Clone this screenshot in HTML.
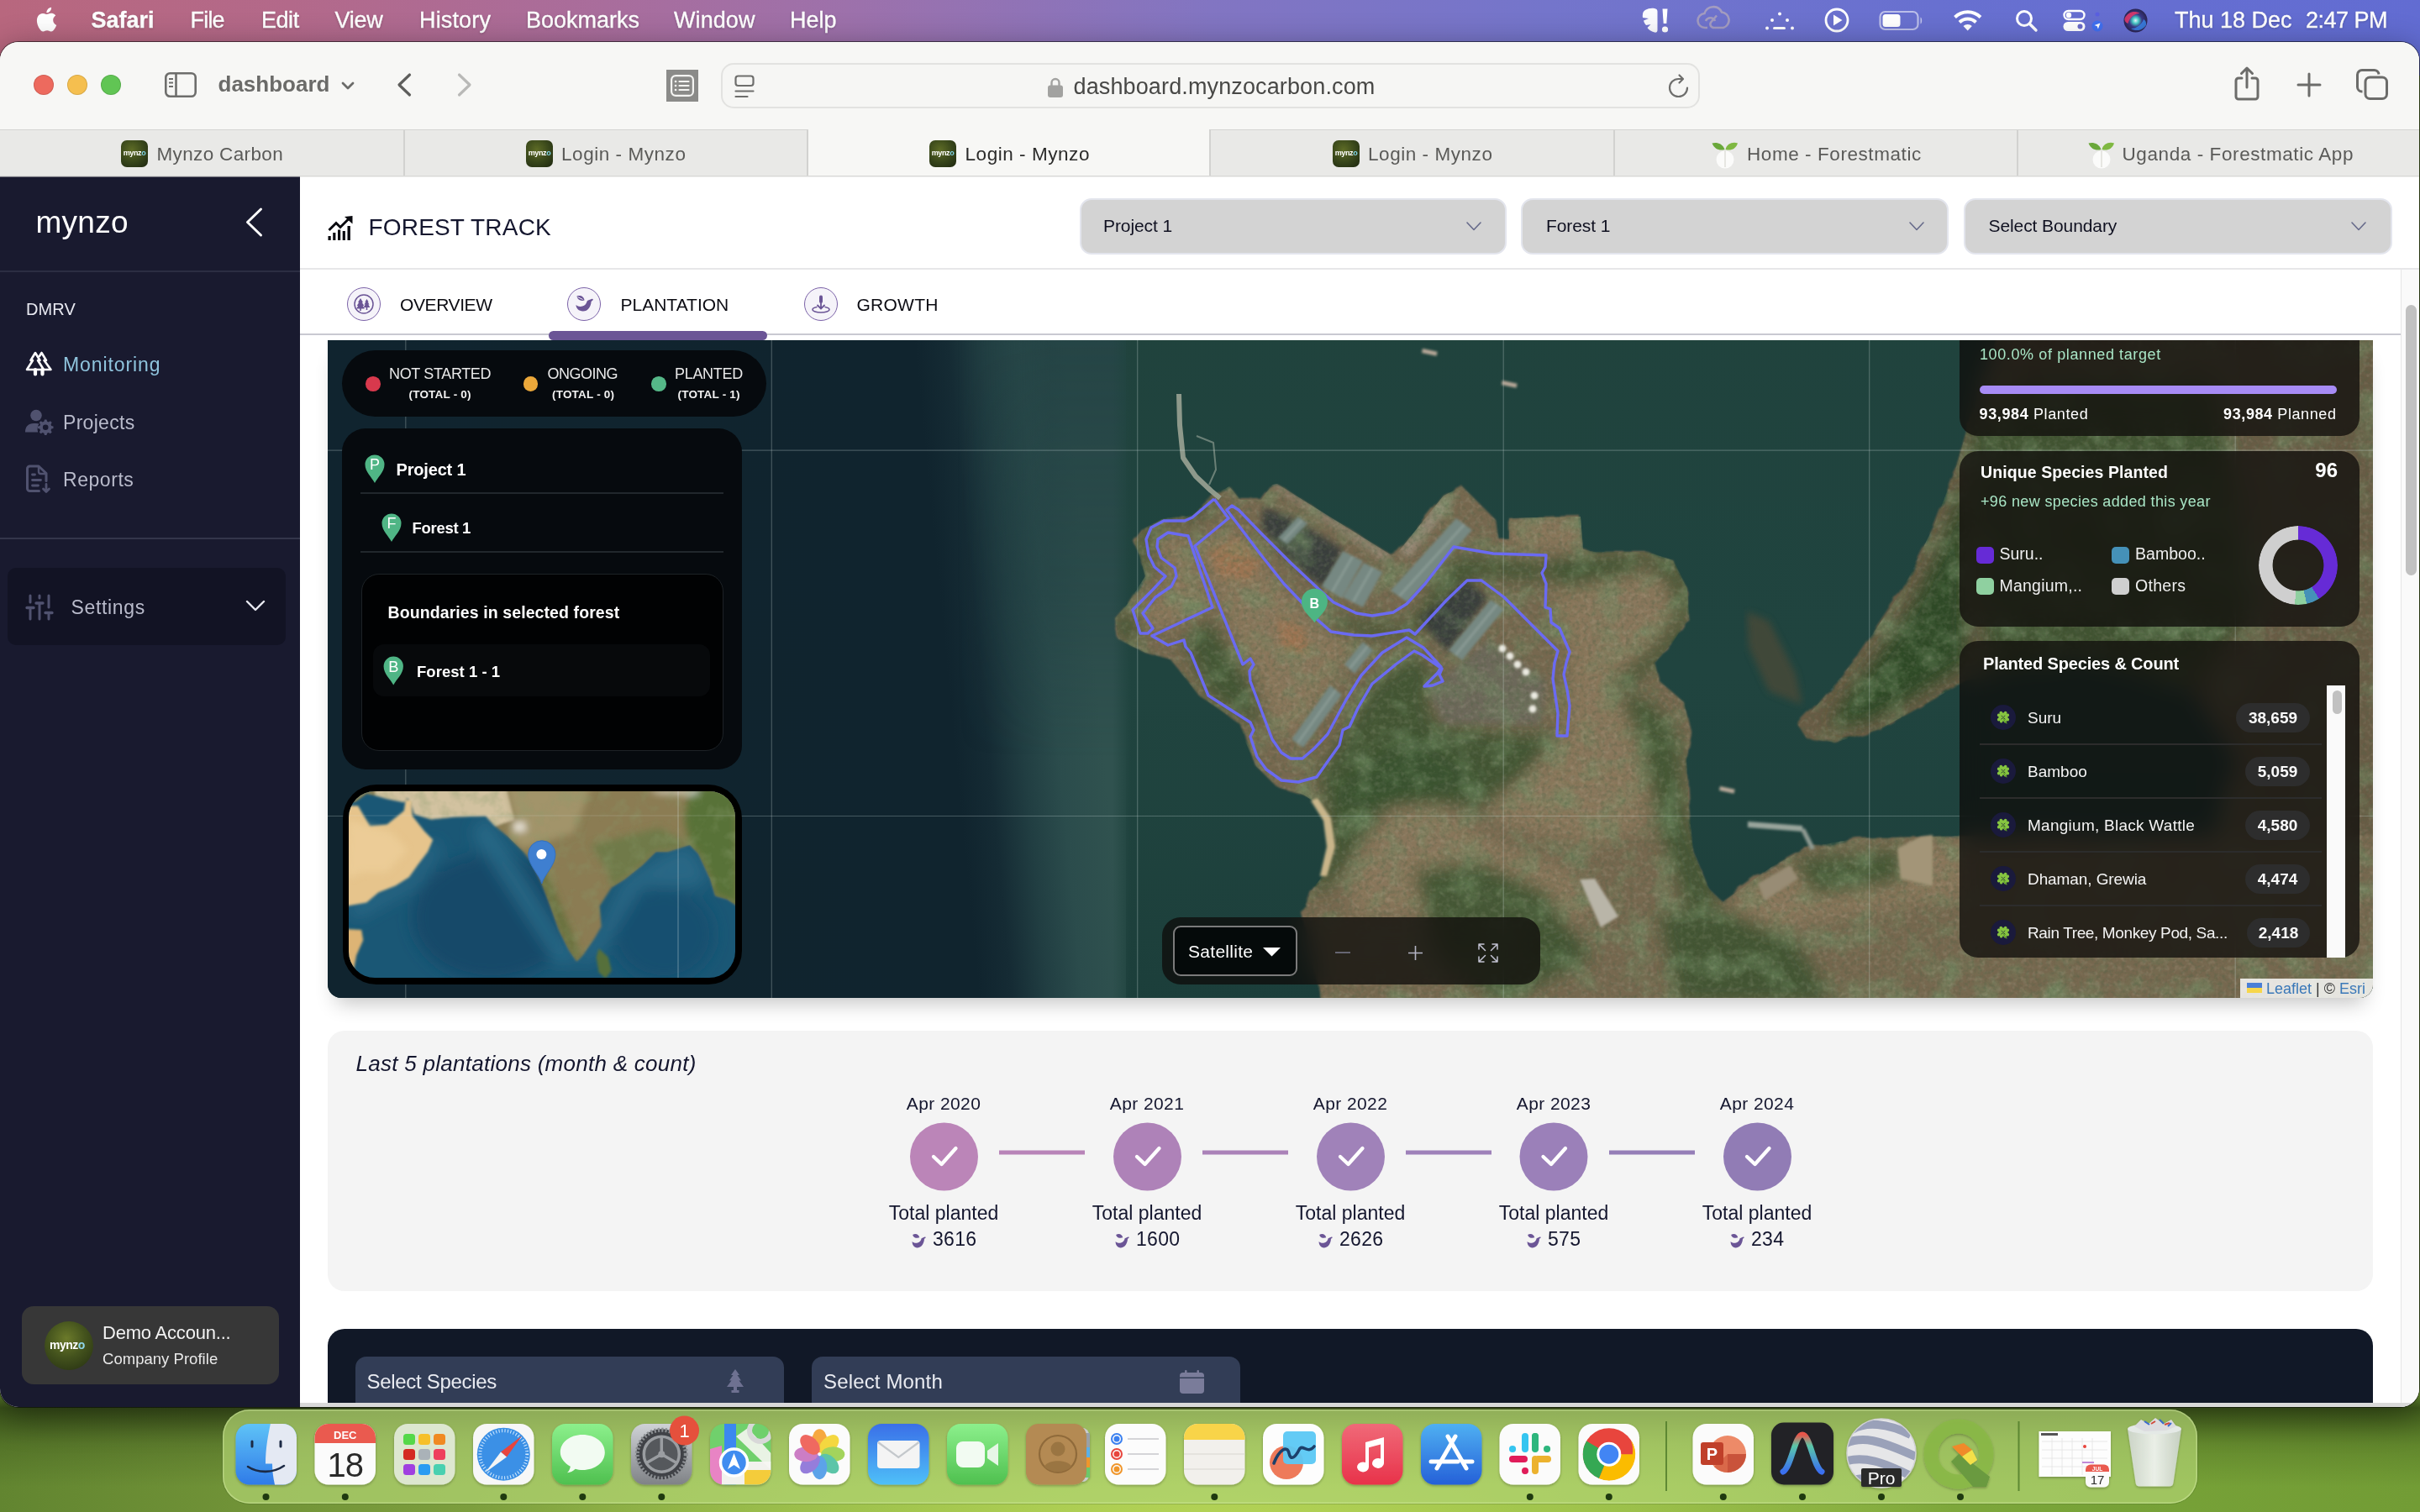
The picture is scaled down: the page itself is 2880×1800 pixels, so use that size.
<!DOCTYPE html>
<html lang="en">
<head>
<meta charset="utf-8">
<title>Login - Mynzo</title>
<style>
*{box-sizing:border-box}
html,body{margin:0;padding:0}
body{-webkit-font-smoothing:antialiased;width:2880px;height:1800px;overflow:hidden;position:relative;font-family:"Liberation Sans",sans-serif;background:#5d8a2e;color:#111}
.abs{position:absolute}
svg{display:block;overflow:visible}
.t{position:absolute;white-space:nowrap;line-height:1}
#page,#menubar,#win{will-change:transform}
</style>
</head>
<body>
<style>
#desk{left:0;top:0;width:2880px;height:1800px;background:
 linear-gradient(180deg,rgba(20,35,5,0) 1660px,rgba(20,35,5,.5) 1676px,rgba(20,35,5,.18) 1720px,rgba(20,35,5,0) 1770px),
 radial-gradient(ellipse 900px 240px at 1440px 1840px,#b8d658 0%,rgba(170,205,80,.7) 45%,rgba(120,165,55,0) 100%),
 linear-gradient(90deg,#628530 0%,#76983a 14%,#8db048 35%,#a2c250 50%,#86ad40 72%,#78a338 86%,#729c35 100%)}
#menubar{left:0;top:0;width:2880px;height:90px;background:linear-gradient(90deg,#b8677e 0%,#b3698a 12%,#a96d9c 25%,#9d71ab 35%,#8275c2 50%,#7475cb 64%,#6870d0 80%,#626cd2 100%)}
#menubar .t{color:#fff;font-size:27px;top:10.500px;-webkit-text-stroke:.35px #fff;text-shadow:0 1px 3px rgba(0,0,0,.25)}
#win{left:0;top:50px;width:2879px;height:1625px;border-radius:22px 22px 22px 22px;background:#fff;overflow:hidden;box-shadow:0 0 0 1px rgba(0,0,0,.55),0 10px 40px rgba(0,0,0,.45)}
#toolbar{left:0;top:0;width:2880px;height:104px;background:#f7f7f5}
#tabbar{left:0;top:104px;width:2880px;height:57px;background:#e9e9e7;border-top:1px solid #d4d4d2;border-bottom:2px solid #d9d9d7}
.tab{position:absolute;top:0;height:54px;border-right:2px solid #d2d2d0}
.tab .t{font-size:22.500px;color:#5a5a58;top:17.500px;letter-spacing:.55px}
.fav{position:absolute;top:12px;width:32px;height:32px;border-radius:7px;background:radial-gradient(circle at 40% 35%,#5d6b25 0%,#36441a 55%,#1d260f 100%);overflow:hidden}
.fav span{position:absolute;left:0;right:0;top:11px;text-align:center;font-size:9px;line-height:9px;color:#fff;font-weight:700;letter-spacing:-.4px}
.fav span i{font-style:normal;color:#7fd3e6}
</style>
<div id="desk" class="abs"></div>
<div id="menubar" class="abs">
 <svg class="abs" style="left:41px;top:7px" width="27" height="32" viewBox="0 0 27 32"><path fill="#fff" d="M22.2 17c0-3.6 2.9-5.3 3.1-5.4-1.700-2.500-4.300-2.800-5.200-2.800-2.200-.2-4.300 1.300-5.400 1.300-1.100 0-2.900-1.300-4.700-1.200-2.400 0-4.700 1.400-5.900 3.600-2.500 4.400-.600 10.900 1.800 14.400 1.200 1.700 2.600 3.700 4.500 3.600 1.800-.1 2.500-1.200 4.700-1.200 2.200 0 2.800 1.200 4.700 1.100 1.900 0 3.200-1.800 4.400-3.500 1.400-2 1.900-3.900 2-4-.1 0-3.900-1.500-4-5.900zM18.600 6.300c1-1.200 1.700-2.900 1.500-4.600-1.400.1-3.200 1-4.200 2.200-.9 1-1.700 2.800-1.500 4.400 1.600.1 3.200-.8 4.200-2z"/></svg>
 <span class="t" style="left:108.500px;font-weight:700">Safari</span>
 <span class="t" style="left:226.500px;letter-spacing:-.8px">File</span>
 <span class="t" style="left:311px;letter-spacing:-.45px">Edit</span>
 <span class="t" style="left:398.500px;letter-spacing:-.25px">View</span>
 <span class="t" style="left:499px;letter-spacing:.15px">History</span>
 <span class="t" style="left:626px">Bookmarks</span>
 <span class="t" style="left:802px;letter-spacing:.08px">Window</span>
 <span class="t" style="left:940px;letter-spacing:0px">Help</span>

 <svg class="abs" style="left:1950px;top:0" width="620" height="50" viewBox="1950 0 620 50">
  <g fill="#fff">
   <path d="M1955 17c0-5 7-8 14-7 2 .3 3.500 1.500 3.500 3.500V36c0 2-1.500 3-3.500 2.500-4-1-7-3-8.500-5.500l4-4-5.500 1c-1.500-1.500-2.500-3.500-3-5.500l6-2.500-7-1c-.3-1.500-.3-2.800 0-4z" opacity=".97"/>
   <path d="M1978.500 10.500h6l-1.200 17.500h-3.600z"/><circle cx="1981.500" cy="35" r="3.600"/>
  </g>
  <g fill="none" stroke="#a39cc0" stroke-width="2.600"><path d="M2032 33h-2.500a8.500 8.500 0 0 1-1-17 11 11 0 0 1 20.500-1.500 9.500 9.500 0 0 1 2 18.500H2040c-4 0-6-4-3.500-7l6.500-7.500"/><path d="M2030 25c2-5 9-5 11 0"/></g>
  <g fill="#fff"><circle cx="2103" cy="33.500" r="2"/><circle cx="2109" cy="24" r="2"/><circle cx="2118" cy="16.500" r="2"/><circle cx="2127" cy="24" r="2"/><circle cx="2133" cy="33.500" r="2"/><rect x="2110" y="32" width="15" height="3" rx="1.500"/></g>
  <circle cx="2186" cy="24" r="13" fill="none" stroke="#fff" stroke-width="2.800"/><path d="M2182 17.500v13l10.500-6.500z" fill="#fff"/>
  <rect x="2237.500" y="14" width="45" height="21" rx="6" fill="none" stroke="#fff" stroke-opacity=".55" stroke-width="2.200"/><rect x="2240.500" y="17" width="21" height="15" rx="3.500" fill="#fff"/><path d="M2285.500 20.500c2.200.8 2.200 7.200 0 8z" fill="#fff" fill-opacity=".6"/>
  <g fill="none" stroke="#fff" stroke-width="4" stroke-linecap="butt"><path d="M2326.500 20.500a22 22 0 0 1 30.500 0"/><path d="M2332 26.500a14 14 0 0 1 19.500 0"/></g><path d="M2336.500 31l5.200 5.500 5.200-5.500a7.500 7.500 0 0 0-10.400 0z" fill="#fff"/>
  <circle cx="2409" cy="22" r="8.500" fill="none" stroke="#fff" stroke-width="3"/><path d="M2415.500 28.500l7.500 7.500" stroke="#fff" stroke-width="3.400" stroke-linecap="round"/>
  <rect x="2456.500" y="13" width="24" height="10" rx="5" fill="none" stroke="#fff" stroke-width="2.400"/><circle cx="2462" cy="18" r="3.200" fill="#fff"/><rect x="2455.500" y="26" width="26" height="11" rx="5.500" fill="#fff"/><circle cx="2475.500" cy="31.500" r="3" fill="#6a6cc8"/>
  <circle cx="2496" cy="17" r="2.500" fill="#5a5fe0"/><circle cx="2496" cy="31" r="6.500" fill="#3f6ff0"/><path d="M2499.500 27.500l-2.600 7-1.200-3.200-3.200-1.200z" fill="#fff"/>
  <defs><radialGradient id="siri" cx=".5" cy=".5" r=".5"><stop offset="0" stop-color="#e8f4ff"/><stop offset=".25" stop-color="#4ad0c8"/><stop offset=".55" stop-color="#3a3a8a"/><stop offset="1" stop-color="#2a2450"/></radialGradient></defs>
  <circle cx="2541.500" cy="24.500" r="14" fill="url(#siri)"/><path d="M2528.500 22c4-8 12-10 18-6-6 0-12 4-14 12-3-1-4.500-3.500-4-6z" fill="#e83a6a" opacity=".85"/><path d="M2554 30c-4 6-12 8-18 4 7 0 13-5 15-11 2.500 1.500 3.500 4 3 7z" fill="#3a8af0" opacity=".8"/>
 </svg>
 <span class="t" style="left:2588px">Thu 18 Dec</span>
 <span class="t" style="left:2744px;letter-spacing:-.5px">2:47 PM</span>
</div>
<div id="win" class="abs">
 <div id="toolbar" class="abs">
  <div class="abs" style="left:40px;top:39px;width:24px;height:24px;border-radius:50%;background:#ed6a5e;box-shadow:inset 0 0 0 1px rgba(0,0,0,.12)"></div>
  <div class="abs" style="left:80px;top:39px;width:24px;height:24px;border-radius:50%;background:#f5bf4f;box-shadow:inset 0 0 0 1px rgba(0,0,0,.12)"></div>
  <div class="abs" style="left:120px;top:39px;width:24px;height:24px;border-radius:50%;background:#61c554;box-shadow:inset 0 0 0 1px rgba(0,0,0,.12)"></div>
  <svg class="abs" style="left:196px;top:36px" width="38" height="30" viewBox="0 0 38 30" fill="none" stroke="#6e6e6c" stroke-width="2.600"><rect x="1.300" y="1.300" width="35.400" height="27.400" rx="5"/><path d="M13.500 1.500v27"/><path d="M5 8h5M5 12.500h5M5 17h5" stroke-width="2"/></svg>
  <span class="t" style="left:259.500px;top:37px;font-size:26px;font-weight:700;color:#6b6b69">dashboard</span>
  <svg class="abs" style="left:406px;top:47px" width="16" height="10" viewBox="0 0 16 10" fill="none" stroke="#6b6b69" stroke-width="2.800" stroke-linecap="round" stroke-linejoin="round"><path d="M2 2l6 6 6-6"/></svg>
  <svg class="abs" style="left:472px;top:37px" width="18" height="28" viewBox="0 0 18 28" fill="none" stroke="#5e5e5c" stroke-width="3.200" stroke-linecap="round" stroke-linejoin="round"><path d="M15.500 2L3 14l12.500 12"/></svg>
  <svg class="abs" style="left:544px;top:37px" width="18" height="28" viewBox="0 0 18 28" fill="none" stroke="#b9b9b7" stroke-width="3.200" stroke-linecap="round" stroke-linejoin="round"><path d="M2.500 2L15 14 2.500 26"/></svg>
  <div class="abs" style="left:793px;top:33px;width:38px;height:38px;background:#8b8b89"></div>
  <svg class="abs" style="left:798px;top:39px" width="28" height="26" viewBox="0 0 28 26" fill="none" stroke="#f4f4f2" stroke-width="2.200" stroke-linecap="round"><rect x="1.100" y="1.100" width="25.800" height="23.800" rx="5"/><path d="M10.500 8h11M10.500 13h11M10.500 18h11"/><path d="M6 8h.1M6 13h.1M6 18h.1" stroke-width="2.600"/></svg>
  <div class="abs" style="left:858px;top:25px;width:1165px;height:54px;border-radius:15px;background:#f6f6f4;border:2px solid #e2e2e0"></div>
  <svg class="abs" style="left:874px;top:39px" width="24" height="28" viewBox="0 0 24 28" fill="none" stroke="#6e6e6c" stroke-width="2.200" stroke-linecap="round"><rect x="1.500" y="1.500" width="21" height="11.500" rx="3"/><path d="M1.500 19.500h21M1.500 26h14"/></svg>
  <svg class="abs" style="left:1246.500px;top:40.500px" width="18" height="25" viewBox="0 0 18 25"><path fill="none" stroke="#a2a2a0" stroke-width="2.400" d="M4.500 11V7.500a4.500 4.500 0 0 1 9 0V11"/><rect x="0" y="10.500" width="18" height="14.500" rx="3" fill="#a2a2a0"/></svg>
  <span class="t" style="left:1277.500px;top:40px;font-size:27px;color:#484846;letter-spacing:.13px">dashboard.mynzocarbon.com</span>
  <svg class="abs" style="left:1985px;top:38px" width="26" height="29" viewBox="0 0 26 29" fill="none" stroke="#6e6e6c" stroke-width="2.200" stroke-linecap="round" stroke-linejoin="round"><path d="M23 16.500A10.500 10.500 0 1 1 12.500 6H17"/><path d="M13.500 1.500L18 6l-4.500 4.500"/></svg>
  <svg class="abs" style="left:2658px;top:29px" width="32" height="41" viewBox="0 0 32 41" fill="none" stroke="#6c6c6a" stroke-width="3" stroke-linecap="round" stroke-linejoin="round"><path d="M10 14H6a3 3 0 0 0-3 3v19a3 3 0 0 0 3 3h20a3 3 0 0 0 3-3V17a3 3 0 0 0-3-3h-4"/><path d="M16 25V2.500M9.500 8.500L16 2l6.500 6.500"/></svg>
  <svg class="abs" style="left:2733px;top:36px" width="30" height="30" viewBox="0 0 30 30" fill="none" stroke="#6c6c6a" stroke-width="3" stroke-linecap="round"><path d="M15 2v26M2 15h26"/></svg>
  <svg class="abs" style="left:2804px;top:32px" width="38" height="37" viewBox="0 0 38 37" fill="none" stroke="#6c6c6a" stroke-width="3" stroke-linejoin="round"><rect x="11" y="10" width="25.500" height="25.500" rx="5.500"/><path d="M7.500 27H7a5.500 5.500 0 0 1-5.500-5.500V7A5.500 5.500 0 0 1 7 1.500h14.500A5.500 5.500 0 0 1 27 6.500"/></svg>
 </div>
 <div id="tabbar" class="abs">
  <div class="tab" style="left:0;width:482px"><div class="fav" style="left:144px"><span>mynz<i>o</i></span></div><span class="t" style="left:186.500px;letter-spacing:.35px">Mynzo Carbon</span></div>
  <div class="tab" style="left:482px;width:480px"><div class="fav" style="left:144px"><span>mynz<i>o</i></span></div><span class="t" style="left:186px">Login - Mynzo</span></div>
  <div class="tab" style="left:962px;width:479px;background:#f7f7f5;top:-1px;height:55px"><div class="fav" style="left:144px;top:13px"><span>mynz<i>o</i></span></div><span class="t" style="left:186.500px;color:#2b2b2a;top:18.500px">Login - Mynzo</span></div>
  <div class="tab" style="left:1441px;width:481px"><div class="fav" style="left:145px"><span>mynz<i>o</i></span></div><span class="t" style="left:187px">Login - Mynzo</span></div>
  <div class="tab" style="left:1922px;width:480px">
   <svg class="abs" style="left:114px;top:9px" width="34" height="38" viewBox="0 0 34 38"><circle cx="17" cy="26" r="10.500" fill="#fbfbfa"/><path d="M17 35V15" stroke="#e6e6e2" stroke-width="2" fill="none"/><path d="M16.500 14C14 6 6 5 1.500 6.500 4 13 10 16 16.500 14z" fill="#6aa83a"/><path d="M17.500 14C19 7 26 4.500 32 6.500 30 13 24 16 17.500 14z" fill="#7fb842"/></svg>
   <span class="t" style="left:157px;letter-spacing:.57px">Home - Forestmatic</span></div>
  <div class="tab" style="left:2402px;width:480px;border-right:0">
   <svg class="abs" style="left:82px;top:9px" width="34" height="38" viewBox="0 0 34 38"><circle cx="17" cy="26" r="10.500" fill="#fbfbfa"/><path d="M17 35V15" stroke="#e6e6e2" stroke-width="2" fill="none"/><path d="M16.500 14C14 6 6 5 1.500 6.500 4 13 10 16 16.500 14z" fill="#6aa83a"/><path d="M17.500 14C19 7 26 4.500 32 6.500 30 13 24 16 17.500 14z" fill="#7fb842"/></svg>
   <span class="t" style="left:123.500px;letter-spacing:.59px">Uganda - Forestmatic App</span></div>
 </div>
</div>
<style>
#page{left:0;top:0;width:2880px;height:1800px;clip-path:inset(210.500px 1px 125px 0px round 0 0 22px 22px)}
#side{left:0;top:210px;width:357px;height:1466px;background:#191a2f}
.nav{font-size:23px;color:#b9bbcb}
</style>
<div id="page" class="abs">
<div id="side" class="abs"></div>
<div class="abs" style="left:0;top:322px;width:357px;height:2px;background:#2b2d42"></div>
<div class="abs" style="left:0;top:640px;width:357px;height:2px;background:#34364b"></div>
<!-- logo -->
<span class="t" style="left:42.500px;top:246px;font-size:37px;color:#fff;letter-spacing:.25px;font-weight:400">mynz<span style="color:#fff">o</span></span>
<svg class="abs" style="left:292px;top:247px" width="21" height="35" viewBox="0 0 21 35" fill="none" stroke="#fff" stroke-width="3" stroke-linecap="round" stroke-linejoin="round"><path d="M18.500 2L2.500 17.500l16 15.500"/></svg>
<span class="t" style="left:31px;top:358px;font-size:20px;color:#e8e9f1;letter-spacing:.1px">DMRV</span>
<!-- monitoring -->
<svg class="abs" style="left:30px;top:418px" width="33" height="30" viewBox="0 0 33 30" fill="none" stroke="#fff" stroke-width="2.600" stroke-linejoin="round" stroke-linecap="round"><path d="M12 2L6.500 11h2.500L2 22h20L15 11h2.500z" fill="#191a2f"/><path d="M19.500 2l-2.500 4M19.500 2L25 11h-2.500L30.500 22H22"/><path d="M12 22v5.500M20.500 22v5.500" stroke-width="4.200"/></svg>
<span class="t nav" style="left:75px;top:422.500px;color:#8fc4dd;letter-spacing:.9px">Monitoring</span>
<!-- projects -->
<svg class="abs" style="left:29px;top:487px" width="35" height="31" viewBox="0 0 35 31" fill="#50526f"><circle cx="14" cy="7.500" r="6.800"/><path d="M1 27.500c0-7 4-10.500 10-10.500h3c1.300 0 2.500.2 3.600.600-2 2.300-2.600 6.500-1.400 9.900z"/><path d="M26.500 12.500l.6 2.300 1.700.7 2.100-1.200 1.800 1.800-1.200 2.100.7 1.700 2.300.6v2.500l-2.300.6-.7 1.700 1.200 2.100-1.800 1.800-2.100-1.200-1.700.7-.6 2.300h-2.500l-.6-2.300-1.700-.7-2.100 1.200-1.800-1.800 1.200-2.100-.7-1.700-2.300-.6v-2.500l2.300-.6.7-1.700-1.200-2.100 1.800-1.800 2.100 1.200 1.700-.7.6-2.300zM25.200 18.400a3.300 3.300 0 1 0 0 6.600 3.300 3.300 0 0 0 0-6.600z" fill-rule="evenodd"/></svg>
<span class="t nav" style="left:75px;top:491.800px;letter-spacing:.3px">Projects</span>
<!-- reports -->
<svg class="abs" style="left:30px;top:553px" width="32" height="35" viewBox="0 0 32 35" fill="none" stroke="#50526f" stroke-width="3" stroke-linecap="round" stroke-linejoin="round"><path d="M16.500 31.500H5.500a3 3 0 0 1-3-3V5a3 3 0 0 1 3-3h10.500L25 10.500v9"/><path d="M16 2.500v6a2.500 2.500 0 0 0 2.500 2.500H24" stroke-width="2.400"/><path d="M8.500 12h3M8.500 18.500h10M8.500 25h7" stroke-width="2.800"/><path d="M25 23.500v8M21.500 29l3.500 3.500L28.500 29" stroke-width="2.800"/></svg>
<span class="t nav" style="left:75px;top:560.400px;letter-spacing:.55px">Reports</span>
<!-- settings -->
<div class="abs" style="left:9px;top:676px;width:331px;height:92px;border-radius:10px;background:#121324"></div>
<svg class="abs" style="left:30px;top:707px" width="34" height="32" viewBox="0 0 34 32" fill="none" stroke="#50526f" stroke-width="3" stroke-linecap="round"><path d="M6 2v8M6 17v13M17 2v3M17 12v18M28 2v14M28 23v7"/><path d="M2 16.500h8M13 11h8M24 22.500h8" stroke-width="3.400"/></svg>
<span class="t nav" style="left:84.500px;top:712px;letter-spacing:.67px">Settings</span>
<svg class="abs" style="left:292px;top:714px" width="24" height="14" viewBox="0 0 24 14" fill="none" stroke="#e8e9f1" stroke-width="2.400" stroke-linecap="round" stroke-linejoin="round"><path d="M2 2l10 10L22 2"/></svg>
<!-- account -->
<div class="abs" style="left:26px;top:1555px;width:306px;height:93px;border-radius:14px;background:#373737"></div>
<div class="abs" style="left:53px;top:1573px;width:58px;height:58px;border-radius:50%;background:radial-gradient(circle at 45% 35%,#6b7a2a 0%,#44531d 45%,#222c10 100%)"></div>
<span class="t" style="left:59px;top:1594px;font-size:14px;color:#fff;font-weight:700;letter-spacing:-.5px">mynz<span style="color:#8fd6ea">o</span></span>
<span class="t" style="left:122px;top:1575.700px;font-size:22px;color:#f2f2f2;letter-spacing:-.2px">Demo Accoun...</span>
<span class="t" style="left:122px;top:1609.200px;font-size:18.500px;color:#e9e9e9;letter-spacing:.03px">Company Profile</span>
<style>
.dd{position:absolute;top:236px;height:67px;border-radius:14px;background:#d3d3d3;border:2px solid #e3e5ed}
.ddt{font-size:21px;color:#0f1020;top:258px}
.tabc{position:absolute;top:342px;width:40px;height:40px;border-radius:50%;background:#f5f3f9;border:1.500px solid #7b62a8}
.tabt{font-size:21px;color:#0b0b12;top:352px}
</style>
<div class="abs" style="left:357px;top:210px;width:2523px;height:1470px;background:#fff"></div>
<div class="abs" style="left:357px;top:319px;width:2523px;height:2px;background:#e7e7e9"></div>
<svg class="abs" style="left:390px;top:257px" width="30" height="29" viewBox="0 0 30 29"><path d="M1.500 17L10 8.500l5 5L25.500 3" fill="none" stroke="#0a0a0f" stroke-width="3" stroke-linejoin="miter"/><path d="M29.500 0v9.500L20 1z" fill="#0a0a0f"/><path d="M.5 24h3.200v5H.5zM6.200 20h3.200v9H6.200zM12 16.500h3.200V29H12zM17.700 18h3.200v11h-3.200zM23.500 12h3.400v17h-3.400z" fill="#0a0a0f"/></svg>
<span class="t" style="left:438.500px;top:257px;font-size:28px;color:#14162e;letter-spacing:.18px">FOREST TRACK</span>
<div class="dd" style="left:1285px;width:508px"></div>
<div class="dd" style="left:1810px;width:509px"></div>
<div class="dd" style="left:2337px;width:510px"></div>
<span class="t ddt" style="left:1313px;letter-spacing:-.1px">Project 1</span>
<span class="t ddt" style="left:1840px;letter-spacing:-.1px">Forest 1</span>
<span class="t ddt" style="left:2366.500px;letter-spacing:-.09px">Select Boundary</span>
<svg class="abs" style="left:1745px;top:264px" width="18" height="11" viewBox="0 0 18 11" fill="none" stroke="#666a8a" stroke-width="1.600" stroke-linecap="round" stroke-linejoin="round"><path d="M1 1l8 8.500L17 1"/></svg>
<svg class="abs" style="left:2272px;top:264px" width="18" height="11" viewBox="0 0 18 11" fill="none" stroke="#666a8a" stroke-width="1.600" stroke-linecap="round" stroke-linejoin="round"><path d="M1 1l8 8.500L17 1"/></svg>
<svg class="abs" style="left:2798px;top:264px" width="18" height="11" viewBox="0 0 18 11" fill="none" stroke="#666a8a" stroke-width="1.600" stroke-linecap="round" stroke-linejoin="round"><path d="M1 1l8 8.500L17 1"/></svg>
<!-- tabs -->
<div class="abs" style="left:357px;top:396.500px;width:2502px;height:2.500px;background:#c9c9d1"></div>
<div class="abs" style="left:653px;top:394px;width:260px;height:11px;border-radius:6px;background:#6b5596"></div>
<div class="tabc" style="left:413px"></div>
<svg class="abs" style="left:421px;top:350px" width="24" height="24" viewBox="0 0 24 24"><circle cx="12" cy="12" r="11" fill="none" stroke="#6b5596" stroke-width="1.500"/><path d="M8 5l-3 5h1.200l-2.500 4h1.500L3 17.500h4.200V20h1.600v-2.500H13L10.800 14h1.500L9.800 10H11z M15.500 6l-2.200 3.500h1l-1.800 3h1.200l-2 3.500h3V19h1.600v-3h3l-2-3.500h1.200l-1.800-3h1z" fill="#6b5596"/></svg>
<span class="t tabt" style="left:476px;letter-spacing:-.4px">OVERVIEW</span>
<div class="tabc" style="left:675px"></div>
<svg class="abs" style="left:684px;top:351px" width="23" height="22" viewBox="0 0 23 22" fill="#6b5596"><path d="M2.500 1.500c4.500-1.500 8.500.5 9 5-4.500 1.300-8.300-.8-9-5z"/><path d="M3.500 2.500l6 3" stroke="#f5f3f9" stroke-width=".9" fill="none"/><path d="M1.500 12c1.800 1.600 4.600 2.400 7.600 1.600 3-.8 4.800-3 5.400-5.600.2-.8.700-1.300 1.500-1.600l4.600-1.700c1-.3 1.600.8 1 1.500l-2 1.700c-.3 6-3.800 11.600-9.800 11.600-5 0-8.300-3.700-8.300-7.500z"/></svg>
<span class="t tabt" style="left:738.500px">PLANTATION</span>
<div class="tabc" style="left:957px"></div>
<svg class="abs" style="left:965px;top:350px" width="24" height="24" viewBox="0 0 24 24" fill="none" stroke="#6b5596" stroke-width="1.500" stroke-linecap="round"><rect x="10" y="1.500" width="4" height="9.500" rx="2" fill="#6b5596" stroke="none"/><path d="M12 11v6M8 13.500l4 4 4-4" stroke-width="1.800"/><path d="M7 15.500c-3 .6-5 1.700-5 3 0 2 4.500 3.500 10 3.500s10-1.500 10-3.500c0-1.300-2-2.400-5-3"/></svg>
<span class="t tabt" style="left:1019.500px;letter-spacing:.25px">GROWTH</span>
<!-- page scrollbar -->
<div class="abs" style="left:2857px;top:321px;width:23px;height:1360px;background:#fafafa;border-left:1.500px solid #e6e6e6"></div>
<div class="abs" style="left:2863px;top:363px;width:13px;height:322px;border-radius:7px;background:#c1c1c1"></div>
<style>
#map{left:390px;top:405px;width:2434px;height:783px;overflow:hidden;border-radius:0 0 16px 16px;background:#1f4340;box-shadow:0 16px 24px -10px rgba(0,0,0,.24)}
</style>
<div id="map" class="abs">
<svg class="abs" style="left:0;top:0" width="2434" height="783" viewBox="390 405 2434 783">
<defs>
<linearGradient id="wg" x1="390" x2="2824" y1="800" y2="560" gradientUnits="userSpaceOnUse">
<stop offset="0" stop-color="#10242f"/><stop offset=".3" stop-color="#10242e"/><stop offset=".316" stop-color="#152b34"/><stop offset=".333" stop-color="#213e42"/><stop offset=".35" stop-color="#2b4c4c"/><stop offset=".372" stop-color="#30524f"/><stop offset=".42" stop-color="#30524f"/></linearGradient>
<linearGradient id="bandv" x1="0" x2="0" y1="405" y2="900" gradientUnits="userSpaceOnUse"><stop offset="0" stop-color="#fff"/><stop offset=".6" stop-color="#888"/><stop offset="1" stop-color="#000"/></linearGradient>
<linearGradient id="bandh" x1="1140" x2="1250" y1="0" y2="0" gradientUnits="userSpaceOnUse"><stop offset="0" stop-color="#1d3a3e" stop-opacity="0"/><stop offset="1" stop-color="#1d3a3e" stop-opacity=".55"/></linearGradient>
<mask id="bandm" maskUnits="userSpaceOnUse" x="1140" y="405" width="220" height="500"><rect x="1140" y="405" width="220" height="500" fill="url(#bandv)"/></mask>
<linearGradient id="wg2" x1="1324" x2="1346" y1="0" y2="0" gradientUnits="userSpaceOnUse"><stop offset="0" stop-color="#20443f" stop-opacity="0"/><stop offset="1" stop-color="#20443f"/></linearGradient>
<linearGradient id="vg" x1="0" x2="0" y1="405" y2="1188" gradientUnits="userSpaceOnUse"><stop offset="0" stop-color="#20413a" stop-opacity=".4"/><stop offset=".5" stop-color="#1e403c" stop-opacity="0"/><stop offset="1" stop-color="#183a37" stop-opacity=".55"/></linearGradient>
<filter id="bl6" x="-5%" y="-5%" width="110%" height="110%"><feGaussianBlur stdDeviation="4"/></filter>
<filter id="bl14" x="-10%" y="-10%" width="120%" height="120%"><feGaussianBlur stdDeviation="10"/></filter>
<filter id="bl3"><feGaussianBlur stdDeviation="1.600"/></filter>
<filter id="rough" x="-5%" y="-5%" width="110%" height="110%"><feTurbulence type="fractalNoise" baseFrequency="0.03" numOctaves="3" seed="7" result="n"/><feDisplacementMap in="SourceGraphic" in2="n" scale="9"/><feGaussianBlur stdDeviation="1"/></filter>
<filter id="tex" x="0" y="0" width="100%" height="100%"><feTurbulence type="fractalNoise" baseFrequency="0.03" numOctaves="4" seed="11"/><feColorMatrix type="matrix" values="0 0 0 0 0.17  0 0 0 0 0.27  0 0 0 0 0.13  2.2 0 0 0 -0.98"/></filter>
<filter id="tex2" x="0" y="0" width="100%" height="100%"><feTurbulence type="fractalNoise" baseFrequency="0.16" numOctaves="2" seed="3"/><feColorMatrix type="matrix" values="0 0 0 0 0.80  0 0 0 0 0.74  0 0 0 0 0.60  0 1.9 0 0 -0.88"/></filter>
<filter id="tex3" x="0" y="0" width="100%" height="100%"><feTurbulence type="fractalNoise" baseFrequency="0.2" numOctaves="2" seed="9"/><feColorMatrix type="matrix" values="0 0 0 0 0.08  0 0 0 0 0.12  0 0 0 0 0.06  0 0 1.9 0 -0.85"/></filter>
<clipPath id="landclip"><path d="M1443 590 L1463 579 L1476 595 L1501 595 L1514 577 L1520 576 L1656 661 L1664 657 L1718 590 L1740 579 L1781 620 L1784 642 L1796 642 L1796 617 L1881 615 L1884 654 L1897 657 L1960 657 L1991 667 L2008 701 L2010 736 L1991 764 L1969 789 L1975 811 L2004 836 L2013 874 L2007 905 L2010 960 L2015 1014 L2034 1059 L2050 1074 L2079 1053 L2108 1032 L2153 1008 L2211 998 L2340 995 L2846 995 L2846 1194 L1573 1194 L1566 1162 L1550 1088 L1560 1061 L1576 1040 L1587 1008 L1581 971 L1573 960 L1551 946 L1520 937 L1495 912 L1482 883 L1476 862 L1426 827 L1394 786 L1363 777 L1331 761 L1327 736 L1341 720 L1363 686 L1357 664 L1350 645 L1363 628 L1385 617 L1419 613Z"/><path d="M2340 514 L2327 559 L2301 627 L2264 702 L2211 781 L2163 839 L2140 863 L2150 879 L2184 884 L2237 868 L2290 839 L2340 810 L2475 786 L2608 823 L2661 903 L2634 995 L2846 995 L2846 389 L2380 389 L2359 453Z"/></clipPath>
</defs>
<rect x="390" y="405" width="2434" height="783" fill="url(#wg)"/>
<rect x="1140" y="405" width="210" height="500" fill="url(#bandh)" mask="url(#bandm)"/>
<rect x="1324" y="405" width="1500" height="783" fill="url(#wg2)"/>
<rect x="1340" y="405" width="1484" height="783" fill="url(#vg)"/>

<g filter="url(#bl6)" opacity=".8"><path d="M2079 728 L2105 739 L2137 802 L2145 839 L2105 823 L2081 770Z" fill="#4a4a38" /></g>
<g filter="url(#rough)">
<path d="M1443 590 L1463 579 L1476 595 L1501 595 L1514 577 L1520 576 L1656 661 L1664 657 L1718 590 L1740 579 L1781 620 L1784 642 L1796 642 L1796 617 L1881 615 L1884 654 L1897 657 L1960 657 L1991 667 L2008 701 L2010 736 L1991 764 L1969 789 L1975 811 L2004 836 L2013 874 L2007 905 L2010 960 L2015 1014 L2034 1059 L2050 1074 L2079 1053 L2108 1032 L2153 1008 L2211 998 L2340 995 L2846 995 L2846 1194 L1573 1194 L1566 1162 L1550 1088 L1560 1061 L1576 1040 L1587 1008 L1581 971 L1573 960 L1551 946 L1520 937 L1495 912 L1482 883 L1476 862 L1426 827 L1394 786 L1363 777 L1331 761 L1327 736 L1341 720 L1363 686 L1357 664 L1350 645 L1363 628 L1385 617 L1419 613Z" fill="#76674f" />
<path d="M2340 514 L2327 559 L2301 627 L2264 702 L2211 781 L2163 839 L2140 863 L2150 879 L2184 884 L2237 868 L2290 839 L2340 810 L2475 786 L2608 823 L2661 903 L2634 995 L2846 995 L2846 389 L2380 389 L2359 453Z" fill="#685c45" />
</g>
<g clip-path="url(#landclip)">
<g filter="url(#bl14)">
<path d="M1379 639 L1413 639 L1441 723 L1372 755 L1350 730 L1394 692 L1379 654Z" fill="#8a775c" opacity=".92"/>
<path d="M1426 651 L1463 620 L1520 692 L1567 742 L1614 761 L1583 818 L1539 874 L1520 874 L1492 799 L1488 786 L1479 789Z" fill="#8a775c" opacity=".92"/>
<path d="M1843 698 L1944 679 L1985 695 L1991 736 L1960 774 L1916 811 L1928 843 L1960 858 L2000 874 L2010 960 L1790 960 L1834 905 L1865 877 L1868 780Z" fill="#8a775c" opacity=".92"/>
<path d="M1796 617 L1881 615 L1884 654 L1799 657Z" fill="#8a775c" opacity=".92"/>
<path d="M1841 929 L1925 929 L1968 982 L1894 1008 L1788 982 L1761 950Z" fill="#8a775c" opacity=".92"/>
<path d="M1629 971 L1708 955 L1788 1008 L1867 1035 L1894 1088 L1788 1141 L1682 1088 L1603 1088Z" fill="#8a775c" opacity=".92"/>
<path d="M2052 1077 L2105 1045 L2211 1008 L2340 1003 L2340 1067 L2211 1088 L2105 1109Z" fill="#8a775c" opacity=".92"/>
<path d="M1583 736 L1677 745 L1730 664 L1834 667 L1834 692 L1765 686 L1740 695 L1686 755 L1633 758 L1583 752Z" fill="#39522f" opacity=".85"/>
<path d="M1410 761 L1438 736 L1476 792 L1488 811 L1504 862 L1488 858 L1438 827 L1416 777Z" fill="#39522f" opacity=".85"/>
<path d="M1598 874 L1633 814 L1683 777 L1708 805 L1696 821 L1708 862 L1803 874 L1850 874 L1834 905 L1771 960 L1583 960 L1567 927Z" fill="#39522f" opacity=".85"/>
<path d="M1944 664 L1991 664 L2010 701 L2007 748 L1975 786 L1934 821 L1916 811 L1960 774 L1991 736 L1985 695Z" fill="#39522f" opacity=".85"/>
<path d="M1840 664 L1960 659 L1944 686 L1865 701 L1842 695Z" fill="#39522f" opacity=".85"/>
<path d="M1363 628 L1419 613 L1443 590 L1448 601 L1419 623 L1382 628 L1368 648 L1375 673 L1363 686 L1350 645Z" fill="#39522f" opacity=".85"/>
<path d="M1327 736 L1347 723 L1363 761 L1331 761Z" fill="#39522f" opacity=".85"/>
<path d="M1925 823 L1968 839 L1999 876 L2010 982 L2047 1072 L2010 1088 L1973 982 L1946 876Z" fill="#39522f" opacity=".85"/>
<path d="M1576 955 L1629 908 L1682 876 L1761 929 L1655 961 L1618 1008 L1576 1061 L1560 1061 L1584 1008Z" fill="#39522f" opacity=".85"/>
<path d="M1682 1035 L1761 1024 L1841 1061 L1894 1141 L1788 1194 L1708 1141Z" fill="#39522f" opacity=".85"/>
<path d="M1973 1088 L2052 1082 L2132 1114 L2184 1194 L1999 1194Z" fill="#39522f" opacity=".85"/>
<path d="M2132 1024 L2264 1008 L2264 1051 L2158 1067Z" fill="#39522f" opacity=".85"/>
<path d="M2343 506 L2423 453 L2634 453 L2687 717 L2528 929 L2370 876Z" fill="#39522f" opacity=".85"/>
<path d="M2335 575 L2311 649 L2274 723 L2227 791 L2190 839 L2179 866 L2222 860 L2280 829 L2340 791 L2340 575Z" fill="#2f4a27" />
</g>
<g filter="url(#bl6)">
<path d="M1438 654 L1476 642 L1501 667 L1488 692 L1451 686Z" fill="#a4734f" opacity=".7"/>
<path d="M1520 736 L1551 748 L1558 780 L1526 774Z" fill="#a4734f" opacity=".7"/>
<path d="M1699 821 L1771 761 L1840 811 L1834 862 L1718 862Z" fill="#6c685b" opacity=".9"/>
<path d="M1514 577 L1520 576 L1656 661 L1649 668Z" fill="#9a8d7c" opacity=".9"/>
<path d="M1664 657 L1718 590 L1731 595 L1677 664Z" fill="#9a8d7c" opacity=".9"/>
<path d="M1504 604 L1539 617 L1598 654 L1583 692 L1570 698 L1532 664 L1501 629Z" fill="#33393a" opacity=".92"/>
<path d="M1689 736 L1746 692 L1771 711 L1724 777 L1708 761Z" fill="#33393a" opacity=".92"/>
</g>
<rect x="390" y="405" width="2434" height="783" filter="url(#tex)" opacity=".7"/>
<rect x="390" y="405" width="2434" height="783" filter="url(#tex2)" opacity=".18"/>
<rect x="390" y="405" width="2434" height="783" filter="url(#tex3)" opacity=".5"/>
<g filter="url(#bl3)">
<path d="M1521 640 L1545 615 L1556 623 L1532 648Z" fill="#768882" />
<path d="M1573 698 L1598 656 L1622 668 L1597 712Z" fill="#768882" />
<path d="M1598 711 L1623 670 L1645 681 L1622 723Z" fill="#768882" />
<path d="M1655 703 L1733 617 L1752 631 L1675 717Z" fill="#768882" />
<path d="M1724 774 L1774 714 L1790 725 L1740 786Z" fill="#768882" />
<path d="M1600 791 L1622 764 L1634 774 L1612 802Z" fill="#768882" />
<path d="M1537 880 L1583 816 L1597 827 L1551 890Z" fill="#768882" />
<path d="M1527 644L1550 619" stroke="#9aaaa4" stroke-width="2" opacity=".7"/>
<path d="M1585 705L1610 662" stroke="#9aaaa4" stroke-width="2" opacity=".7"/>
<path d="M1610 717L1634 675" stroke="#9aaaa4" stroke-width="2" opacity=".7"/>
<path d="M1665 710L1743 624" stroke="#9aaaa4" stroke-width="2" opacity=".7"/>
<path d="M1732 780L1782 719" stroke="#9aaaa4" stroke-width="2" opacity=".7"/>
<path d="M1606 796L1628 769" stroke="#9aaaa4" stroke-width="2" opacity=".7"/>
<path d="M1544 885L1590 821" stroke="#9aaaa4" stroke-width="2" opacity=".7"/>
<circle cx="1788" cy="772" r="4.500" fill="#ecebe2"/>
<circle cx="1797" cy="781" r="4.500" fill="#ecebe2"/>
<circle cx="1806" cy="791" r="4.500" fill="#ecebe2"/>
<circle cx="1816" cy="800" r="4.500" fill="#ecebe2"/>
<circle cx="1826" cy="828" r="4.500" fill="#ecebe2"/>
<circle cx="1824" cy="844" r="4.500" fill="#ecebe2"/>
</g>
</g>
<path d="M1403 469 L1404 506 L1408 545 L1423 567 L1441 584 L1452 593" fill="none" stroke="#9aa394" stroke-width="6" stroke-linejoin="round" opacity=".9"/>
<path d="M1424 519 L1444 527 L1447 559 L1439 577" fill="none" stroke="#8a9a8e" stroke-width="2" stroke-linejoin="round" opacity=".7"/>
<g filter="url(#bl3)"><path d="M1568 950 L1584 974 L1589 1008 L1579 1043 L1571 1043 L1579 1008 L1575 977 L1560 953Z" fill="#c9b58a" /></g>
<g filter="url(#bl3)">
<path d="M1880 1047 L1898 1046 L1926 1091 L1905 1104Z" fill="#b9b5a8" />
<path d="M2080 978 L2145 983 L2146 990 L2080 985Z" fill="#9aa59c" />
<path d="M2143 988 L2148 986 L2160 1010 L2155 1012Z" fill="#8f9a92" />
<path d="M2286 996 L2300 994 L2300 1055 L2262 1046 L2258 1010Z" fill="#a39578" />
<path d="M2092 1052 L2130 1030 L2140 1046 L2100 1072Z" fill="#988c74" />
<rect x="1693" y="415" width="18" height="5" fill="#b9a999" transform="rotate(12 1693 415)"/>
<rect x="1788" y="453" width="18" height="5" fill="#b9a999" transform="rotate(12 1788 453)"/>
<rect x="2047" y="936" width="18" height="5" fill="#b9a999" transform="rotate(12 2047 936)"/>
</g>
<path d="M482.8 405V1188" stroke="#cfe0e0" stroke-opacity=".28" stroke-width="1.200"/>
<path d="M918.3 405V1188" stroke="#cfe0e0" stroke-opacity=".28" stroke-width="1.200"/>
<path d="M1353.7 405V1188" stroke="#cfe0e0" stroke-opacity=".28" stroke-width="1.200"/>
<path d="M1789.2 405V1188" stroke="#cfe0e0" stroke-opacity=".28" stroke-width="1.200"/>
<path d="M2224.7 405V1188" stroke="#cfe0e0" stroke-opacity=".28" stroke-width="1.200"/>
<path d="M2660.2 405V1188" stroke="#cfe0e0" stroke-opacity=".28" stroke-width="1.200"/>
<path d="M390 536.2H2824" stroke="#cfe0e0" stroke-opacity=".28" stroke-width="1.200"/>
<path d="M390 971.5H2824" stroke="#cfe0e0" stroke-opacity=".28" stroke-width="1.200"/>
<path d="M1445 594 L1419 616 L1410 620 L1385 620 L1370 628 L1364 642 L1367 661 L1374 675 L1387 686 L1371 703 L1348 726 L1357 754 L1366 754 L1372 748 L1360 730 L1375 711 L1394 698 L1400 686 L1398 676 L1382 664 L1377 651 L1378 642 L1390 634 L1414 638 L1443 723 L1371 757 L1390 768 L1409 762 L1411 770 L1417 777 L1438 828 L1488 860 L1492 869 L1488 877 L1496 901 L1507 916 L1525 929 L1545 931 L1567 925 L1584 901 L1594 887 L1598 869 L1606 865 L1616 843 L1633 814 L1661 791 L1683 775 L1693 780 L1716 796 L1713 803 L1717 811 L1705 816 L1695 817 L1711 801 L1715 794 L1694 771 L1674 759 L1645 777 L1620 804 L1602 833 L1580 874 L1564 891 L1550 903 L1536 903 L1525 896 L1514 880 L1488 811 L1487 799 L1492 791 L1488 784 L1479 791 L1422 650 L1462 617 L1445 594" fill="none" stroke="#6a6af2" stroke-width="3.400" stroke-linejoin="round"/>
<path d="M1466 602 L1474 607 L1501 635 L1536 670 L1569 701 L1587 717 L1614 730 L1633 733 L1658 729 L1674 719 L1696 695 L1730 651 L1777 659 L1840 661 L1839 675 L1835 682 L1840 695 L1839 723 L1845 725 L1846 741 L1856 748 L1868 776 L1864 789 L1861 803 L1865 821 L1868 840 L1865 876 L1853 876 L1854 849 L1848 808 L1850 789 L1854 775 L1834 755 L1790 711 L1763 691 L1746 691 L1721 715 L1684 755 L1677 750 L1633 757 L1611 756 L1584 752 L1567 737 L1551 719 L1528 695 L1501 661 L1476 628 L1460 607Z" fill="none" stroke="#6a6af2" stroke-width="3.400" stroke-linejoin="round"/>
<g transform="translate(1564.4 741.2)"><path d="M0 0C-4.500 -7 -15.500 -14 -15.500 -25a15.500 15.500 0 0 1 31 0C15.500 -14 4.500 -7 0 0z" fill="#4db583"/><text x="0" y="-17.500" text-anchor="middle" font-family="Liberation Sans,sans-serif" font-weight="700" font-size="16" fill="#fff">B</text></g>
</svg>
<style>
.glass{position:absolute;background:rgba(13,11,10,.75);-webkit-backdrop-filter:blur(14px);backdrop-filter:blur(14px)}
.w{color:#fff}
.mint{color:#a9e6c6}
.sq{position:absolute;width:21px;height:20px;border-radius:5px}
.lg{font-size:19.500px;color:#efefef}
.row{position:absolute;left:1965.500px;width:407px;height:2px;background:#2c2c2c}
.ic{position:absolute;left:1979px;width:30px;height:30px;border-radius:50%;background:#1a1a3c}
.nm{font-size:19px;color:#f4f4f4;left:2023px}
.pill{position:absolute;height:35px;border-radius:18px;background:#2d2d2d;color:#fafafa;font-size:19px;font-weight:700;line-height:35px;text-align:center;right:75px}
.pin{position:absolute}
</style>
<!-- coordinates inside #map are relative to (390,405) -->
<!-- legend pill -->
<div class="abs" style="left:17px;top:12px;width:505px;height:79px;border-radius:40px;background:#060a0e"></div>
<div class="abs" style="left:45px;top:43px;width:17.500px;height:17.500px;border-radius:50%;background:#d8394d"></div>
<div class="abs" style="left:232.500px;top:43px;width:17.500px;height:17.500px;border-radius:50%;background:#eba83a"></div>
<div class="abs" style="left:385px;top:43px;width:17.500px;height:17.500px;border-radius:50%;background:#55b888"></div>
<span class="t" style="left:73px;top:31px;font-size:18px;color:#e9e9e9;letter-spacing:-.35px">NOT STARTED</span>
<span class="t" style="left:96.500px;top:57.500px;font-size:13.500px;color:#f2f2f2;font-weight:700;letter-spacing:.2px">(TOTAL - 0)</span>
<span class="t" style="left:261.500px;top:31px;font-size:18px;color:#e9e9e9;letter-spacing:-.5px">ONGOING</span>
<span class="t" style="left:267px;top:57.500px;font-size:13.500px;color:#f2f2f2;font-weight:700;letter-spacing:.2px">(TOTAL - 0)</span>
<span class="t" style="left:413px;top:31px;font-size:18px;color:#e9e9e9;letter-spacing:-.3px">PLANTED</span>
<span class="t" style="left:416.500px;top:57.500px;font-size:13.500px;color:#f2f2f2;font-weight:700;letter-spacing:.2px">(TOTAL - 1)</span>
<!-- left panel -->
<div class="abs" style="left:17px;top:105px;width:476px;height:406px;border-radius:28px;background:#060a0e"></div>
<svg class="pin" style="left:44px;top:136px" width="24" height="34" viewBox="0 0 24 34"><path d="M12 34C8.500 27 .5 21 .5 12a11.500 11.500 0 0 1 23 0C23.500 21 15.500 27 12 34z" fill="#4fb585"/><text x="12" y="18.300" text-anchor="middle" font-family="Liberation Sans,sans-serif" font-size="18" fill="#fff">P</text></svg>
<span class="t w" style="left:81.500px;top:143.600px;font-size:20px;font-weight:700;letter-spacing:-.17px">Project 1</span>
<div class="abs" style="left:39px;top:181px;width:432px;height:2px;background:#21272c"></div>
<svg class="pin" style="left:64px;top:206px" width="24" height="34" viewBox="0 0 24 34"><path d="M12 34C8.500 27 .5 21 .5 12a11.500 11.500 0 0 1 23 0C23.500 21 15.500 27 12 34z" fill="#4fb585"/><text x="12" y="18.300" text-anchor="middle" font-family="Liberation Sans,sans-serif" font-size="18" fill="#fff">F</text></svg>
<span class="t w" style="left:100.500px;top:214.700px;font-size:18.500px;font-weight:700;letter-spacing:-.3px">Forest 1</span>
<div class="abs" style="left:39px;top:251px;width:432px;height:2px;background:#21272c"></div>
<div class="abs" style="left:40px;top:278px;width:431px;height:211px;border-radius:21px;background:#010203;border:1.500px solid #1d2226"></div>
<span class="t w" style="left:71.500px;top:314.500px;font-size:19.500px;font-weight:700;letter-spacing:.095px">Boundaries in selected forest</span>
<div class="abs" style="left:54px;top:362px;width:401px;height:62px;border-radius:13px;background:#07090b"></div>
<svg class="pin" style="left:65.500px;top:375.500px" width="24.500" height="34.500" viewBox="0 0 24 34"><path d="M12 34C8.500 27 .5 21 .5 12a11.500 11.500 0 0 1 23 0C23.500 21 15.500 27 12 34z" fill="#4fb585"/><text x="12" y="18.300" text-anchor="middle" font-family="Liberation Sans,sans-serif" font-size="18" fill="#fff">B</text></svg>
<span class="t w" style="left:106px;top:385.500px;font-size:18.500px;font-weight:700;letter-spacing:.04px">Forest 1 - 1</span>
<!-- minimap -->
<div class="abs" style="left:17.500px;top:529px;width:475.500px;height:238px;border-radius:40px;background:#000"></div>
<svg class="abs" style="left:25px;top:537px;border-radius:31px;overflow:hidden" width="460" height="222" viewBox="0 0 460 222">
<defs><filter id="mb"><feGaussianBlur stdDeviation="1.600"/></filter><filter id="mb2"><feGaussianBlur stdDeviation="9"/></filter><filter id="mb3"><feGaussianBlur stdDeviation="4"/></filter>
<filter id="mtex" x="0" y="0" width="100%" height="100%"><feTurbulence type="fractalNoise" baseFrequency="0.06" numOctaves="3" seed="5"/><feColorMatrix type="matrix" values="0 0 0 0 0.25  0 0 0 0 0.33  0 0 0 0 0.15  1.800 0 0 0 -0.800"/></filter>
<clipPath id="mland"><path d="M-3.0 -5.1 L462.6 -5.1 L462.6 136.7 L450.5 128.6 L436.3 124.5 L430.2 104.3 L416.1 73.9 L406.0 63.8 L379.6 71.9 L365.5 71.9 L349.3 88.1 L329.0 104.3 L312.8 114.4 L298.6 136.7 L300.7 161.0 L292.6 175.1 L278.4 195.4 L271.3 202.5 L262.2 189.3 L250.1 165.0 L239.9 136.7 L229.8 110.3 L217.7 84.0 L207.5 71.9 L189.3 53.7 L174.1 41.5 L163.0 29.4 L126.5 30.4 L98.2 33.4 L78.0 27.3 L73.9 13.2 L69.9 8.1 L65.8 13.2 L45.6 9.1 L31.4 5.1 L21.3 3.0 L7.1 13.2 L-3.0 9.1Z"/></clipPath>
</defs>
<rect width="460" height="222" fill="#1a5775"/>
<g filter="url(#mb2)"><ellipse cx="170" cy="150" rx="95" ry="75" fill="#134a69"/><ellipse cx="375" cy="170" rx="60" ry="55" fill="#18506f"/><path d="M163.0 29.4 L271.3 202.5 L248.0 205.5 L146.8 49.6Z" fill="#2c6d8b" opacity=".8"/><path d="M271.3 202.5 L300.7 161.0 L329.0 104.3 L379.6 71.9 L406.0 63.8 L430.2 104.3 L410.0 114.4 L349.3 112.4 L316.9 165.0 L288.5 205.5Z" fill="#2c6d8b" opacity=".7"/><path d="M-3.0 136.7 L35.4 120.5 L71.9 102.2 L100.2 57.7 L110.3 67.8 L82.0 112.4 L37.5 136.7 L9.1 152.9Z" fill="#2c6d8b" opacity=".7"/></g>
<g filter="url(#mb)">
<path d="M-3.0 -5.1 L462.6 -5.1 L462.6 136.7 L450.5 128.6 L436.3 124.5 L430.2 104.3 L416.1 73.9 L406.0 63.8 L379.6 71.9 L365.5 71.9 L349.3 88.1 L329.0 104.3 L312.8 114.4 L298.6 136.7 L300.7 161.0 L292.6 175.1 L278.4 195.4 L271.3 202.5 L262.2 189.3 L250.1 165.0 L239.9 136.7 L229.8 110.3 L217.7 84.0 L207.5 71.9 L189.3 53.7 L174.1 41.5 L163.0 29.4 L126.5 30.4 L98.2 33.4 L78.0 27.3 L73.9 13.2 L69.9 8.1 L65.8 13.2 L45.6 9.1 L31.4 5.1 L21.3 3.0 L7.1 13.2 L-3.0 9.1Z" fill="#8b7c52"/>
<path d="M31.4 -5.1 L187.3 -5.1 L197.4 33.4 L174.1 41.5 L163.0 29.4 L126.5 30.4 L98.2 33.4 L78.0 27.3 L73.9 13.2 L69.9 8.1 L65.8 13.2 L45.6 9.1 L31.4 5.1Z" fill="#d2c2a0"/>
<path d="M-3.0 17.2 L11.1 17.2 L25.3 41.5 L45.6 39.5 L65.8 23.3 L67.8 10.1 L73.9 11.1 L75.9 29.4 L90.1 47.6 L100.2 57.7 L94.1 71.9 L82.0 88.1 L71.9 102.2 L55.7 112.4 L35.4 120.5 L21.3 132.6 L-3.0 136.7Z" fill="#e6c48c"/>
<path d="M-3.0 164.0 L15.2 165.0 L17.2 177.2 L9.1 195.4 L4.0 223.7 L-3.0 223.7Z" fill="#ddb474"/>
<path d="M297.6 187.3 L308.8 197.4 L312.8 213.6 L305.7 222.7 L297.6 215.6 L294.6 197.4Z" fill="#56703a"/>
</g>
<g clip-path="url(#mland)"><g filter="url(#mb3)">
<path d="M288.5 63.8 L369.5 43.5 L406.0 63.8 L379.6 71.9 L365.5 71.9 L349.3 88.1 L329.0 104.3 L312.8 114.4 L308.8 96.2Z" fill="#6f7a48"/>
<path d="M406.0 -5.1 L462.6 -5.1 L462.6 136.7 L450.5 128.6 L436.3 124.5 L430.2 104.3 L416.1 73.9 L406.0 63.8 L399.9 33.4Z" fill="#587238"/>
<path d="M217.7 84.0 L229.8 110.3 L239.9 136.7 L250.1 165.0 L262.2 189.3 L271.3 202.5 L276.4 197.4 L264.2 165.0 L252.1 136.7 L242.0 112.4 L227.8 84.0Z" fill="#5e6e3a" opacity=".8"/>
<path d="M187.3 -5.1 L288.5 -5.1 L268.3 49.6 L207.5 67.8 L189.3 53.7 L197.4 33.4Z" fill="#a89a70" opacity=".8"/>
<path d="M355.3 -1.0 L420.1 -1.0 L410.0 3.4 L369.5 2.6Z" fill="#f4f4f0"/>
<path d="M193.4 37.5 L209.6 36.4 L211.6 47.6 L197.4 48.6Z" fill="#eeeae2" opacity=".9"/>
</g>
<rect width="460" height="222" filter="url(#mtex)" opacity=".45"/>
</g>
<g filter="url(#mb3)"><path d="M0.0 33.4 L51.6 49.6 L69.9 69.9 L45.6 96.2 L17.2 96.2 L-3.0 104.3Z" fill="#f0d4a0" opacity=".55"/></g>
<path d="M392 0V222" stroke="#dfe8e8" stroke-opacity=".4"/>
<path d="M0 29H460" stroke="#dfe8e8" stroke-opacity=".18"/>
<g transform="translate(229.800 110)"><path d="M0 0C-3 -11 -16.200 -22 -16.200 -35a16.200 16.200 0 0 1 32.400 0C16.200 -22 3 -11 0 0z" fill="#3f7fd0" stroke="#3570bc" stroke-width="1"/><circle cx="-.4" cy="-35" r="6" fill="#fff"/></g>
</svg>
<!-- right panels -->
<div class="glass" style="left:1942px;top:-30px;width:476px;height:144px;border-radius:22px"></div>
<span class="t mint" style="left:1966px;top:7.500px;font-size:18px;letter-spacing:.61px">100.0% of planned target</span>
<div class="abs" style="left:1965.500px;top:54px;width:425px;height:10px;border-radius:5px;background:#a78bf5"></div>
<span class="t w" style="left:1965.500px;top:79px;font-size:18px;letter-spacing:.62px"><b>93,984</b> Planted</span>
<span class="t w" style="right:43.500px;top:79px;font-size:18px;letter-spacing:.59px"><b>93,984</b> Planned</span>
<div class="glass" style="left:1942px;top:132px;width:476px;height:209px;border-radius:22px"></div>
<span class="t w" style="left:1967px;top:147.500px;font-size:19.500px;font-weight:700;letter-spacing:.09px">Unique Species Planted</span>
<span class="t w" style="right:42px;top:143px;font-size:24px;font-weight:700">96</span>
<span class="t mint" style="left:1967px;top:182.500px;font-size:18px;letter-spacing:.36px">+96 new species added this year</span>
<div class="sq" style="left:1962px;top:246px;background:#662bd6"></div><span class="t lg" style="left:1989.500px;top:244.500px">Suru..</span>
<div class="sq" style="left:2123px;top:246px;background:#4591b8"></div><span class="t lg" style="left:2151px;top:244.500px;letter-spacing:.04px">Bamboo..</span>
<div class="sq" style="left:1962px;top:283px;background:#8fd0a0"></div><span class="t lg" style="left:1989.500px;top:282.500px;letter-spacing:.23px">Mangium,..</span>
<div class="sq" style="left:2123px;top:283px;background:#cfcfcf"></div><span class="t lg" style="left:2151px;top:282.500px;letter-spacing:.3px">Others</span>
<div class="abs" style="left:2298px;top:220.500px;width:94px;height:94px;border-radius:50%;background:conic-gradient(#662bd6 0deg 148deg,#4591b8 148deg 167.500deg,#8fd0a0 167.500deg 185deg,#cfcfcf 185deg 360deg);-webkit-mask:radial-gradient(circle,transparent 30px,#000 30.800px);mask:radial-gradient(circle,transparent 30px,#000 30.800px)"></div>
<div class="glass" style="left:1942px;top:357.500px;width:476px;height:377px;border-radius:22px"></div>
<span class="t w" style="left:1970px;top:374.500px;font-size:20px;font-weight:700;letter-spacing:-.16px">Planted Species &amp; Count</span>
<div class="abs" style="left:2379px;top:411px;width:22px;height:323.500px;background:#fafafa"></div>
<div class="abs" style="left:2385.500px;top:417px;width:11px;height:28px;border-radius:6px;background:#c1c1c1"></div>
<div class="row" style="top:480px"></div><div class="row" style="top:544px"></div><div class="row" style="top:608px"></div><div class="row" style="top:672px"></div>
<div class="ic" style="top:434px"></div><div class="ic" style="top:498px"></div><div class="ic" style="top:562px"></div><div class="ic" style="top:626px"></div><div class="ic" style="top:690px"></div>
<span class="t nm" style="top:439.500px">Suru</span><span class="t nm" style="top:503.500px">Bamboo</span><span class="t nm" style="top:567.500px;letter-spacing:.26px">Mangium, Black Wattle</span><span class="t nm" style="top:631.500px;letter-spacing:-.09px">Dhaman, Grewia</span><span class="t nm" style="top:695.500px;letter-spacing:-.37px">Rain Tree, Monkey Pod, Sa...</span>
<div class="pill" style="top:432px;width:88px">38,659</div><div class="pill" style="top:496px;width:77px">5,059</div><div class="pill" style="top:560px;width:77px">4,580</div><div class="pill" style="top:624px;width:77px">4,474</div><div class="pill" style="top:688px;width:75px">2,418</div>
<!-- clovers -->
<svg class="abs" style="left:1979px;top:434px" width="30" height="286" viewBox="0 0 30 286"><defs><g id="clv" transform="translate(2.700 2.700) scale(.82)"><path d="M15 15c-1-3-5.500-3.500-5.500-6.500 0-2 2.500-3 4-1.500 .5.500 1 1.200 1.500 2 .5-.8 1-1.500 1.500-2 1.500-1.500 4-.5 4 1.500 0 3-4.500 3.500-5.500 6.500zM15 15c3-1 3.500-5.500 6.500-5.500 2 0 3 2.500 1.500 4-.5.500-1.200 1-2 1.500.8.500 1.500 1 2 1.500 1.500 1.500.5 4-1.500 4-3 0-3.500-4.500-6.500-5.500zM15 15c-3 1-3.500 5.500-6.500 5.500-2 0-3-2.500-1.500-4 .5-.5 1.200-1 2-1.500-.8-.5-1.500-1-2-1.500-1.500-1.500-.5-4 1.500-4 3 0 3.500 4.500 6.500 5.500zM15 15c1 3 5 3.500 5 6 0 1.500-2 2.500-3.200 1.500-.6-.5-1.300-1.500-1.800-2.500-.5 1-1.200 2-1.800 2.500-1.200 1-3.200 0-3.200-1.500 0-2.500 4-3 5-6z" fill="#86c540"/><path d="M15 16c1 3 2.500 5.500 5 7.500" stroke="#5d9a2a" stroke-width="1.400" fill="none" stroke-linecap="round"/></g></defs><use href="#clv"/><use href="#clv" y="64"/><use href="#clv" y="128"/><use href="#clv" y="192"/><use href="#clv" y="256"/></svg>
<!-- control bar -->
<div class="glass" style="left:992.500px;top:687px;width:450px;height:80px;border-radius:22px"></div>
<div class="abs" style="left:1005.500px;top:697px;width:148px;height:60px;border-radius:9px;border:2px solid #7b7b7b;background:#050a0a"></div>
<span class="t w" style="left:1024px;top:717.300px;font-size:21px;letter-spacing:.29px">Satellite</span>
<svg class="abs" style="left:1113px;top:722.500px" width="21" height="11" viewBox="0 0 21 11"><path d="M0 0h21L10.500 10.500z" fill="#fff"/></svg>
<svg class="abs" style="left:1199px;top:728px" width="18" height="2" viewBox="0 0 18 2"><path d="M0 1h18" stroke="#77778a" stroke-width="1.600"/></svg>
<svg class="abs" style="left:1286px;top:720.500px" width="17" height="17" viewBox="0 0 17 17"><path d="M8.500 0v17M0 8.500h17" stroke="#b4b4c4" stroke-width="1.600"/></svg>
<svg class="abs" style="left:1368.500px;top:717.500px" width="24" height="23" viewBox="0 0 24 23" fill="none" stroke="#c2c2d2" stroke-width="1.500" stroke-linecap="round" stroke-linejoin="round"><path d="M1 7V1h6M1 1l7.500 7.500M17 1h6v6M23 1l-7.500 7.500M1 16v6h6M1 22l7.500-7.500M17 22h6v-6M23 22l-7.500-7.500"/></svg>
<!-- attribution -->
<div class="abs" style="left:2276px;top:759.500px;width:158px;height:24px;background:rgba(255,255,255,.82)"></div>
<svg class="abs" style="left:2284px;top:765px" width="18" height="12" viewBox="0 0 18 12"><rect width="18" height="6" fill="#4a7fd6"/><rect y="6" width="18" height="6" fill="#f7d64a"/></svg>
<span class="t" style="left:2307px;top:763px;font-size:18px;color:#333"><span style="color:#3a78b8">Leaflet</span> | © <span style="color:#3a78b8">Esri</span></span>
</div>
<style>
.tl-d{font-size:21px;color:#14162e;letter-spacing:.4px;top:1302.800px;transform:translateX(-50%)}
.tl-t{font-size:23px;color:#14162e;top:1433.400px;transform:translateX(-50%)}
.tl-n{font-size:23px;color:#14162e;top:1464.400px;letter-spacing:.3px}
.tl-c{position:absolute;top:1336.500px;width:81px;height:81px;border-radius:50%}
.tl-l{position:absolute;top:1369.500px;height:5px;width:102px}
</style>
<div class="abs" style="left:390px;top:1227px;width:2434px;height:310px;border-radius:20px;background:#f4f4f4"></div>
<span class="t" style="left:423.500px;top:1253px;font-size:26px;font-style:italic;color:#14162e;letter-spacing:.27px">Last 5 plantations (month &amp; count)</span>
<svg class="abs" style="left:0;top:0;pointer-events:none" width="2880" height="1800" viewBox="0 0 2880 1800">
<defs><g id="chk"><path d="M-13 0l9.500 9L13.500 -10" fill="none" stroke="#fff" stroke-width="4.300" stroke-linecap="round" stroke-linejoin="round"/></g>
<g id="hand" fill="#6b5596" transform="scale(1.150)"><path d="M1 2.500c3-1.800 6.500-.5 7 3-3.200 1.200-6.300-.2-7-3z"/><path d="M.5 9.500c1.200 1.200 3.200 2 5.600 1.400 2.400-.6 3.600-2.600 4-4.600l3.400-1.500c.7-.3 1.300.4.800 1l-1.300 1c0 4-2.400 9.200-7 9.200-3.800 0-5.500-3.500-5.500-6.500z"/></g></defs>
<circle cx="1123.500" cy="1377" r="40.500" fill="#bb85b8"/><circle cx="1365.500" cy="1377" r="40.500" fill="#ae82b8"/><circle cx="1607.500" cy="1377" r="40.500" fill="#a082b9"/><circle cx="1849" cy="1377" r="40.500" fill="#9b80b9"/><circle cx="2091.500" cy="1377" r="40.500" fill="#917cb5"/>
<rect x="1189" y="1369.500" width="102" height="5" fill="#b884b8"/><rect x="1431" y="1369.500" width="102" height="5" fill="#aa82b8"/><rect x="1673" y="1369.500" width="102" height="5" fill="#9e81b9"/><rect x="1915" y="1369.500" width="102" height="5" fill="#957eb7"/>
<use href="#chk" x="1124" y="1377"/><use href="#chk" x="1366" y="1377"/><use href="#chk" x="1608" y="1377"/><use href="#chk" x="1849.500" y="1377"/><use href="#chk" x="2092" y="1377"/>
<use href="#hand" x="1085" y="1467"/><use href="#hand" x="1327" y="1467"/><use href="#hand" x="1569" y="1467"/><use href="#hand" x="1817" y="1467"/><use href="#hand" x="2059" y="1467"/>
</svg>
<span class="t tl-d" style="left:1123px">Apr 2020</span><span class="t tl-d" style="left:1365px">Apr 2021</span><span class="t tl-d" style="left:1607px">Apr 2022</span><span class="t tl-d" style="left:1849px">Apr 2023</span><span class="t tl-d" style="left:2091px">Apr 2024</span>
<span class="t tl-t" style="left:1123px">Total planted</span><span class="t tl-t" style="left:1365px">Total planted</span><span class="t tl-t" style="left:1607px">Total planted</span><span class="t tl-t" style="left:1849px">Total planted</span><span class="t tl-t" style="left:2091px">Total planted</span>
<span class="t tl-n" style="left:1110px">3616</span><span class="t tl-n" style="left:1352px">1600</span><span class="t tl-n" style="left:1594px">2626</span><span class="t tl-n" style="left:1842px">575</span><span class="t tl-n" style="left:2084px">234</span>
<!-- dark filter panel -->
<div class="abs" style="left:390px;top:1582px;width:2434px;height:140px;border-radius:20px;background:#111827"></div>
<div class="abs" style="left:422.500px;top:1615px;width:510px;height:90px;border-radius:13px;background:#323d56"></div>
<div class="abs" style="left:966px;top:1615px;width:510px;height:90px;border-radius:13px;background:#323d56"></div>
<span class="t" style="left:436.500px;top:1633px;font-size:24px;color:#e9ebf1;letter-spacing:-.3px">Select Species</span>
<span class="t" style="left:980px;top:1633px;font-size:24px;color:#e9ebf1;letter-spacing:.15px">Select Month</span>
<svg class="abs" style="left:864px;top:1630px" width="22" height="29" viewBox="0 0 22 29" fill="#6e7191"><path d="M11 0l5 7h-2.500l4.500 6.500h-2.500L21 21h-8v4h2.500v3h-9v-3H9v-4H1l5.500-7.500H4L8.500 7H6z"/></svg>
<svg class="abs" style="left:1403.500px;top:1631px" width="29" height="28" viewBox="0 0 29 28" fill="#7a7c9a"><rect x="0" y="3" width="29" height="25" rx="4"/><rect x="6" y="0" width="2.500" height="6" rx="1.200"/><rect x="20.500" y="0" width="2.500" height="6" rx="1.200"/><rect x="0" y="8.500" width="29" height="1.500" fill="#323d56"/></svg>
<!-- bottom strip -->
<div class="abs" style="left:357px;top:1670px;width:2523px;height:6px;background:#d9d9d9"></div>
</div><!-- /page -->
<div class="abs" style="left:265px;top:1678px;width:2350px;height:112px;border-radius:32px;background:rgba(176,210,112,.72);box-shadow:inset 0 0 0 1.500px rgba(220,240,170,.45),0 0 0 1px rgba(60,90,30,.25)"></div>
<svg class="abs" style="left:0;top:1678px" width="2880" height="122" viewBox="0 1678 2880 122" font-family="Liberation Sans,sans-serif">
<defs>
<linearGradient id="gFinder" x1="0" x2="0" y1="0" y2="1"><stop offset="0" stop-color="#5fc3f7"/><stop offset="1" stop-color="#2f7be8"/></linearGradient>
<linearGradient id="gMail" x1="0" x2="0" y1="0" y2="1"><stop offset="0" stop-color="#3a6fe8"/><stop offset="1" stop-color="#4fc0f8"/></linearGradient>
<linearGradient id="gMsg" x1="0" x2="0" y1="0" y2="1"><stop offset="0" stop-color="#8cf08c"/><stop offset="1" stop-color="#4fc04f"/></linearGradient>
<linearGradient id="gSet" x1="0" x2="0" y1="0" y2="1"><stop offset="0" stop-color="#cfd2d6"/><stop offset="1" stop-color="#7f8286"/></linearGradient>
<linearGradient id="gMusic" x1="0" x2="0" y1="0" y2="1"><stop offset="0" stop-color="#f06a78"/><stop offset="1" stop-color="#e8324a"/></linearGradient>
<linearGradient id="gApp" x1="0" x2="0" y1="0" y2="1"><stop offset="0" stop-color="#4fb0f2"/><stop offset="1" stop-color="#2560d8"/></linearGradient>
<linearGradient id="gArc" x1="0" x2="0" y1="0" y2="1"><stop offset="0" stop-color="#e8554a"/><stop offset=".3" stop-color="#5ac8a8"/><stop offset="1" stop-color="#3a6ff0"/></linearGradient>
<linearGradient id="gTrash" x1="0" x2="1" y1="0" y2="0"><stop offset="0" stop-color="#d5dbd8" stop-opacity=".85"/><stop offset=".5" stop-color="#f4f6f5" stop-opacity=".9"/><stop offset="1" stop-color="#cfd6d2" stop-opacity=".85"/></linearGradient>
<clipPath id="cMaps"><rect x="845" y="1695" width="72.500" height="72.500" rx="16.500"/></clipPath><clipPath id="cGE"><circle cx="2239" cy="1730" r="41"/></clipPath><filter id="ish" x="-10%" y="-10%" width="120%" height="130%"><feDropShadow dx="0" dy="1.500" stdDeviation="1.500" flood-color="#000" flood-opacity=".28"/></filter>
</defs>
<g filter="url(#ish)">
<!-- finder -->
<rect x="280.500" y="1695" width="72.500" height="72.500" rx="16.500" fill="url(#gFinder)"/>
<path d="M322 1695h14.500a16.500 16.500 0 0 1 16.500 16.500v39.500a16.500 16.500 0 0 1-16.500 16.500H327c-2-9-3-17-3-25h-8c0-18 3-34 6-48z" fill="#e4e9f3"/>
<path d="M295 1746c12 8 30 8 43-1" stroke="#1d2a44" stroke-width="2.600" fill="none" stroke-linecap="round"/><path d="M300 1716v6M334 1716v6" stroke="#1d2a44" stroke-width="3" stroke-linecap="round"/>
<!-- calendar -->
<rect x="374.500" y="1695" width="72.500" height="72.500" rx="16.500" fill="#fbfbfb"/><path d="M374.500 1711.500a16.500 16.500 0 0 1 16.500-16.500h39.500a16.500 16.500 0 0 1 16.500 16.500v6.500h-72.500z" fill="#ea5a50"/>
<text x="410.800" y="1712.500" text-anchor="middle" font-size="13" font-weight="700" fill="#fff">DEC</text><text x="410.800" y="1758" text-anchor="middle" font-size="40" fill="#2a2a2a" letter-spacing="-1">18</text>
<!-- launchpad -->
<rect x="469" y="1695" width="72.500" height="72.500" rx="16.500" fill="#dde7d0"/>
<g><rect x="480" y="1707" width="14" height="13" rx="3.500" fill="#55d84a"/><rect x="498" y="1707" width="14" height="13" rx="3.500" fill="#f6c02c"/><rect x="516" y="1707" width="14" height="13" rx="3.500" fill="#f08a24"/><rect x="480" y="1725" width="14" height="13" rx="3.500" fill="#d42a20"/><rect x="498" y="1725" width="14" height="13" rx="3.500" fill="#aab2b8"/><rect x="516" y="1725" width="14" height="13" rx="3.500" fill="#ee3f5c"/><rect x="480" y="1743" width="14" height="13" rx="3.500" fill="#a040e0"/><rect x="498" y="1743" width="14" height="13" rx="3.500" fill="#2a9cf2"/><rect x="516" y="1743" width="14" height="13" rx="3.500" fill="#48d0b0"/></g>
<!-- safari -->
<rect x="563" y="1695" width="72.500" height="72.500" rx="16.500" fill="#f7f7f7"/><circle cx="599.300" cy="1731.200" r="31.500" fill="#3a90e6"/><circle cx="599.300" cy="1731.200" r="28" fill="none" stroke="#d8ecff" stroke-width="4" stroke-dasharray="1 2.500"/><path d="M621 1709.500l-18 25-7-6z" fill="#e8453c"/><path d="M577.500 1753l18.500-24.500 7 6z" fill="#f4f4f4"/>
<!-- messages -->
<rect x="657" y="1695" width="72.500" height="72.500" rx="16.500" fill="url(#gMsg)"/><path d="M693.300 1708c15 0 26.500 9 26.500 21s-11.500 21-26.500 21c-3 0-6-.4-8.600-1.200-2.700 2.700-6.200 4.200-9.700 4.500 2.200-2 3.500-4.700 3.800-7.500-7-3.800-12-10-12-16.800 0-12 11.500-21 26.500-21z" fill="#f2fbf2"/>
<!-- settings -->
<rect x="751" y="1695" width="72.500" height="72.500" rx="16.500" fill="url(#gSet)"/><circle cx="787.300" cy="1731.200" r="30" fill="#3f4246"/><circle cx="787.300" cy="1731.200" r="29" fill="none" stroke="#8b8e92" stroke-width="5" stroke-dasharray="2.200 2.200"/><circle cx="787.300" cy="1731.200" r="21" fill="#55585c" stroke="#9a9da1" stroke-width="3.500"/><path d="M787.300 1731.200V1711M787.300 1731.200l17.500 10M787.300 1731.200l-17.500 10" stroke="#9a9da1" stroke-width="3.500"/><circle cx="787.300" cy="1731.200" r="4" fill="#9a9da1"/>
<!-- maps -->
<g clip-path="url(#cMaps)">
<rect x="845" y="1695" width="72.500" height="72.500" rx="16.500" fill="#6fd06c"/><path d="M845 1725l14-4v46.500h-1a16.500 16.500 0 0 1-13-16.500z" fill="#e884c4"/><path d="M862 1695h14v72.500h-14z" fill="#3a88f0"/><path d="M859 1740h58.500v11a16.500 16.500 0 0 1-16.500 16.500H859z" fill="#f2f2ee"/><path d="M886 1750h31.500v1a16.500 16.500 0 0 1-16.500 16.500H886z" fill="#f4cc3a"/><path d="M876 1710l41.500 40v-20L890 1700z" fill="#f6f6f2" opacity=".9"/><circle cx="905" cy="1703" r="13" fill="none" stroke="#d8d8d8" stroke-width="6"/><circle cx="873.500" cy="1741" r="16" fill="#3f8cf0" stroke="#fff" stroke-width="3.500"/><path d="M873.500 1730l7.500 19-7.500-5-7.500 5z" fill="#fff"/></g>
<!-- photos -->
<rect x="939" y="1695" width="72.500" height="72.500" rx="16.500" fill="#fbfbfb"/>
<g transform="translate(975.300 1731.200)" opacity=".9"><ellipse cx="0" cy="-16" rx="9" ry="14" fill="#f6a02c"/><ellipse cx="0" cy="-16" rx="9" ry="14" fill="#f4d42c" transform="rotate(45)"/><ellipse cx="0" cy="-16" rx="9" ry="14" fill="#9ad04a" transform="rotate(90)"/><ellipse cx="0" cy="-16" rx="9" ry="14" fill="#4ac0a0" transform="rotate(135)"/><ellipse cx="0" cy="-16" rx="9" ry="14" fill="#4a9ae8" transform="rotate(180)"/><ellipse cx="0" cy="-16" rx="9" ry="14" fill="#8a70d8" transform="rotate(225)"/><ellipse cx="0" cy="-16" rx="9" ry="14" fill="#c870c0" transform="rotate(270)"/><ellipse cx="0" cy="-16" rx="9" ry="14" fill="#ee5a50" transform="rotate(315)"/></g>
<!-- mail -->
<rect x="1033" y="1695" width="72.500" height="72.500" rx="16.500" fill="url(#gMail)"/><rect x="1044" y="1715" width="50.500" height="33" rx="4" fill="#f4f4f4"/><path d="M1045 1717l24.300 18 24.200-18" fill="none" stroke="#c4c8cc" stroke-width="2.200"/>
<!-- facetime -->
<rect x="1127" y="1695" width="72.500" height="72.500" rx="16.500" fill="url(#gMsg)"/><rect x="1138" y="1716" width="34" height="31" rx="8" fill="#f2fbf2"/><path d="M1175 1727l13-9v27l-13-9z" fill="#e6f6e6"/>
<!-- contacts -->
<rect x="1224" y="1700" width="72" height="64" rx="8" fill="#c8ccd0"/><rect x="1289" y="1706" width="8" height="17" fill="#9aa0a6"/><rect x="1289" y="1723" width="8" height="12" fill="#5ab0e8"/><rect x="1289" y="1735" width="8" height="12" fill="#f0962c"/><rect x="1289" y="1747" width="8" height="12" fill="#6cc86a"/>
<rect x="1221" y="1695" width="72" height="72.500" rx="15" fill="#b48a52"/><circle cx="1259" cy="1731" r="22" fill="none" stroke="#8f6a3a" stroke-width="2.200"/><circle cx="1259" cy="1725" r="8.500" fill="#9a7442"/><path d="M1243 1746c3-9 29-9 32 0-8 8-24 8-32 0z" fill="#9a7442"/>
<!-- reminders -->
<rect x="1315" y="1695" width="72.500" height="72.500" rx="16.500" fill="#fcfcfc"/><g fill="none" stroke-width="2"><circle cx="1329" cy="1713" r="6" stroke="#3a80f0"/><circle cx="1329" cy="1731" r="6" stroke="#e8453c"/><circle cx="1329" cy="1749" r="6" stroke="#f0962c"/></g><circle cx="1329" cy="1713" r="3.500" fill="#3a80f0"/><circle cx="1329" cy="1731" r="3.500" fill="#e8453c"/><circle cx="1329" cy="1749" r="3.500" fill="#f0962c"/><path d="M1342 1713h37M1342 1731h37M1342 1749h37" stroke="#c8c8cc" stroke-width="1.600"/>
<!-- notes -->
<rect x="1409" y="1695" width="72.500" height="72.500" rx="16.500" fill="#f2f0ec"/><path d="M1409 1711.500a16.500 16.500 0 0 1 16.500-16.500h39.500a16.500 16.500 0 0 1 16.500 16.500v2.500h-72.500z" fill="#f8d44a"/><path d="M1409 1731h72.500M1409 1749h72.500" stroke="#d8d6d0" stroke-width="1.200"/>
<!-- freeform -->
<rect x="1503" y="1695" width="72.500" height="72.500" rx="16.500" fill="#fdfdfd"/><circle cx="1531" cy="1741" r="20" fill="#ee7a5a"/><rect x="1527" y="1704" width="39" height="39" rx="5" fill="#5cc8f4" opacity=".95"/><path d="M1516 1742c6-16 16-22 18-12s8 4 12-4 10 6 18-4" stroke="#1d3f6a" stroke-width="3.600" fill="none" stroke-linecap="round"/>
<!-- music -->
<rect x="1597" y="1695" width="72.500" height="72.500" rx="16.500" fill="url(#gMusic)"/><path d="M1625 1717l22-6v31a7 6 0 1 1-4-5.500v-17l-14 3.800v23.200a7 6 0 1 1-4-5.500z" fill="#fff"/>
<!-- appstore -->
<rect x="1691" y="1695" width="72.500" height="72.500" rx="16.500" fill="url(#gApp)"/><path d="M1732 1710l-22 38M1723 1710l22 38M1703 1740h32M1742 1740h10" stroke="#fff" stroke-width="5" stroke-linecap="round" fill="none"/>
<!-- slack -->
<rect x="1784.500" y="1695" width="72.500" height="72.500" rx="16.500" fill="#fbfbfb"/><g stroke-width="8" stroke-linecap="round" fill="none"><path d="M1815 1710v15" stroke="#36c5f0"/><path d="M1800 1725h.1" stroke="#36c5f0"/><path d="M1827 1710v.1M1827 1722v3" stroke="#2eb67d"/><path d="M1827 1710v14M1841 1725h.1" stroke="#2eb67d"/><path d="M1800 1737h14M1815 1751v.1" stroke="#e01e5a"/><path d="M1827 1737v14M1830 1737h12" stroke="#ecb22e"/></g>
<!-- chrome -->
<rect x="1878.500" y="1695" width="72.500" height="72.500" rx="16.500" fill="#fbfbfb"/><circle cx="1914.800" cy="1731.200" r="31" fill="#e8453c"/><path d="M1914.800 1731.200L1888 1715.500A31 31 0 0 0 1903 1760z" fill="#34a853"/><path d="M1914.800 1731.200L1903 1760a31 31 0 0 0 39-44z" fill="#fbbc05"/><path d="M1914.800 1731.200h28a31 31 0 0 0-1.500-15.500h-27z" fill="#e8453c"/><circle cx="1914.800" cy="1731.200" r="14.500" fill="#fff"/><circle cx="1914.800" cy="1731.200" r="11.500" fill="#4285f4"/>
<!-- powerpoint -->
<rect x="2014.500" y="1695" width="72.500" height="72.500" rx="16.500" fill="#fbfbfb"/><circle cx="2056" cy="1731" r="22" fill="#ed8a68"/><path d="M2056 1731h22a22 22 0 0 1-22 22z" fill="#c9533a"/><path d="M2056 1731v22a22 22 0 0 1-16-7z" fill="#d9684a"/><rect x="2024" y="1717" width="27" height="27" rx="3" fill="#c0402a"/><text x="2037.500" y="1738" text-anchor="middle" font-size="20" font-weight="700" fill="#fff">P</text>
<!-- arc-like -->
<rect x="2108" y="1693.500" width="74" height="74" rx="15" fill="#222128"/><path d="M2122 1752c10-6 14-44 23-44s13 38 23 44" stroke="url(#gArc)" stroke-width="7" fill="none" stroke-linecap="round"/>
<!-- google earth pro -->
<circle cx="2239" cy="1730" r="41" fill="#e6e6e8"/><g clip-path="url(#cGE)"><path d="M2190 1722c24-16 50-6 90 12M2190 1742c26-12 54 0 86 16M2200 1764c18-8 40-2 60 9M2204 1702c16-10 42-8 70 6" stroke="#8c94b0" stroke-width="10" fill="none" opacity=".85"/></g><circle cx="2239" cy="1730" r="41" fill="none" stroke="#d0d0d4" stroke-width="1.500"/>
<rect x="2215" y="1748" width="48" height="22" rx="2" fill="#2a2a2a"/><text x="2239" y="1767" text-anchor="middle" font-size="21" fill="#fff">Pro</text>
<!-- qgis -->
<circle cx="2331" cy="1731" r="33" fill="none" stroke="#8ab848" stroke-width="17" opacity=".92"/><path d="M2332 1730l36 28-4 12h-16l-26-30z" fill="#6a9a40"/><path d="M2323 1722l14-4 10 8-12 8z" fill="#f08a2c"/><path d="M2335 1734l12-8 6 12-8 6z" fill="#f4e04a"/>
<!-- calendar window thumb -->
<rect x="2426.500" y="1704" width="85.500" height="54" fill="#fdfdfd"/><path d="M2430 1716h78M2430 1726h78M2430 1736h78M2430 1746h78M2442 1712v44M2454 1712v44M2466 1712v44M2478 1712v44M2490 1712v44" stroke="#e2e2e2" stroke-width=".8"/><rect x="2429" y="1706" width="20" height="3" fill="#555"/><circle cx="2481" cy="1722" r="2" fill="#e8453c"/><rect x="2478" y="1740" width="14" height="2" fill="#c08ad8"/>
<rect x="2482" y="1743.500" width="28" height="27" rx="6" fill="#fbfbfb"/><path d="M2482 1749.500a6 6 0 0 1 6-6h16a6 6 0 0 1 6 6v2.500h-28z" fill="#ea5a50"/><text x="2496" y="1750.500" text-anchor="middle" font-size="6.500" font-weight="700" fill="#fff">JUL</text><text x="2496" y="1767" text-anchor="middle" font-size="15" fill="#2a2a2a">17</text>
<!-- trash -->
<path d="M2532 1701h64l-9.500 64a5 5 0 0 1-5 4.500h-35a5 5 0 0 1-5-4.500z" fill="url(#gTrash)"/><ellipse cx="2564" cy="1701" rx="32" ry="6.500" fill="#e4e9e6"/><path d="M2540 1698l8-8 9 5 8-7 10 7 9-5 6 8-12 5-26 1z" fill="#dcdce0"/><path d="M2552 1692l6 4M2570 1690l5 5M2584 1694l-4 4" stroke="#3a6ad0" stroke-width="2"/><path d="M2560 1695l5-3M2576 1696l6-2" stroke="#d04a3a" stroke-width="2"/>
</g>
<!-- badge -->
<circle cx="814.500" cy="1703" r="17.500" fill="#e5503c"/><text x="814.500" y="1711" text-anchor="middle" font-size="22" fill="#fff">1</text>
<!-- separators -->
<rect x="1982" y="1692" width="2" height="83" fill="#527e2c" opacity=".85"/><rect x="2401.500" y="1692" width="2" height="83" fill="#527e2c" opacity=".85"/>
<!-- dots -->
<g fill="#1f3a10"><circle cx="316.500" cy="1782" r="4"/><circle cx="410.800" cy="1782" r="4"/><circle cx="599.300" cy="1782" r="4"/><circle cx="693.300" cy="1782" r="4"/><circle cx="787.300" cy="1782" r="4"/><circle cx="1445.300" cy="1782" r="4"/><circle cx="1820.800" cy="1782" r="4"/><circle cx="1914.800" cy="1782" r="4"/><circle cx="2050.800" cy="1782" r="4"/><circle cx="2145" cy="1782" r="4"/><circle cx="2239" cy="1782" r="4"/><circle cx="2333" cy="1782" r="4"/></g>
</svg>
</body>
</html>
